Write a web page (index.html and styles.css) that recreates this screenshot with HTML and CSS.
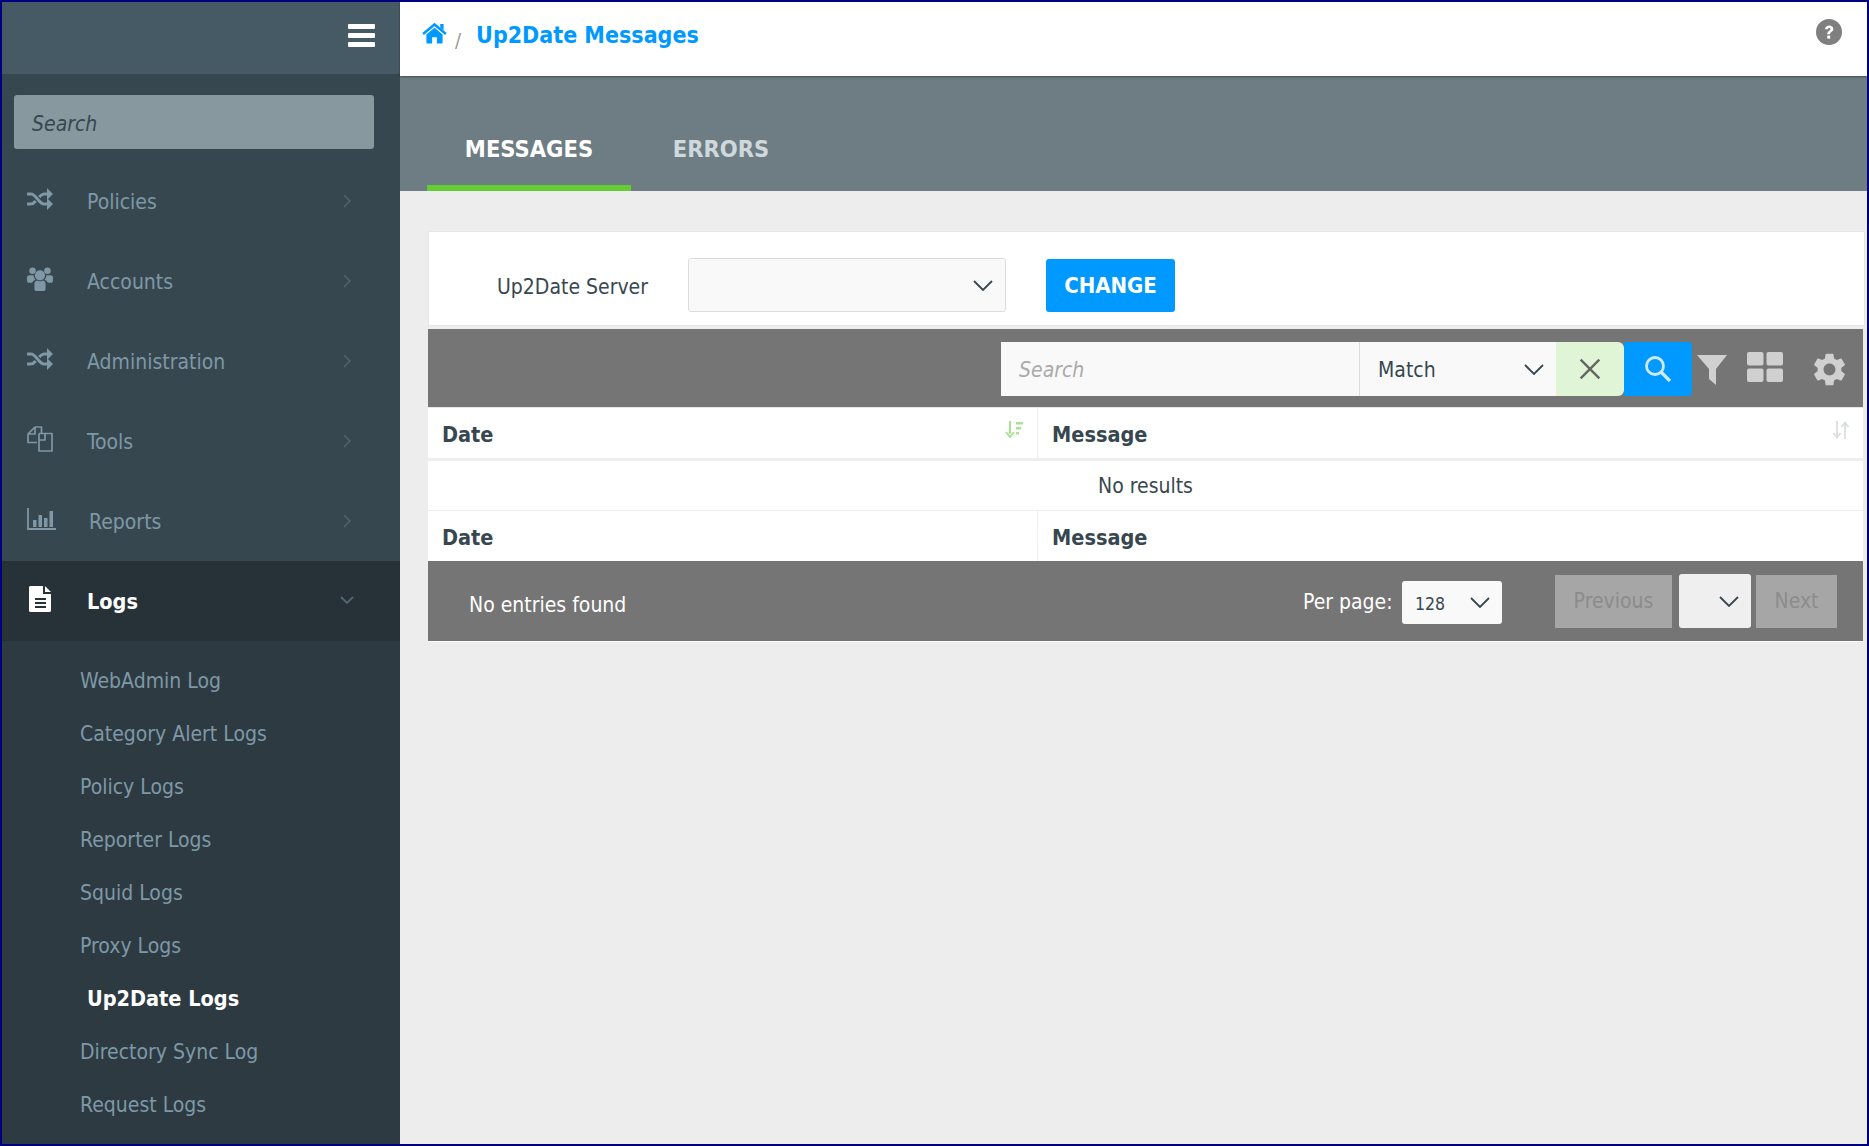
FILE: index.html
```html
<!DOCTYPE html>
<html lang="en">
<head>
    <meta charset="UTF-8">
    <meta name="viewport" content="width=device-width, initial-scale=1.0">
    <title>Up2Date Messages</title>
    <link rel="stylesheet" href="styles.css">
</head>
<body>
    <div class="frame">
        <aside class="sidebar">
            <div class="brand-bar">
                <button class="burger"><span></span><span></span><span></span></button>
            </div>
            <div class="side-search"><input class="side-input" type="text" placeholder="Search"></div>
            <nav class="menu">
                <a class="menu-item">
                    <svg class="menu-icon" viewBox="0 0 26 22"><path d="M0 6h4c5 0 8 10 13 10h4M0 16h4c1.800 0 3.300-1.300 4.700-3M12.300 9C13.700 7.300 15.200 6 17 6h4" fill="none" stroke="currentColor" stroke-width="3"/><path d="M20 0l6 6-6 6zM20 10l6 6-6 6z" fill="currentColor"/></svg>
                    <span class="menu-label">Policies</span>
                    <svg class="chev" viewBox="0 0 8 14"><path d="M1 1l6 6-6 6" fill="none" stroke="currentColor" stroke-width="1.300"/></svg>
                </a>
                <a class="menu-item">
                    <svg class="menu-icon" viewBox="0 0 28 26"><circle cx="6" cy="4" r="3.500" fill="currentColor"/><circle cx="22" cy="4" r="3.500" fill="currentColor"/><circle cx="14" cy="9" r="5.500" fill="currentColor"/><path d="M0 11.500c0-1.500 1-2.500 2.500-2.500H7c.3 2 1 3.500 2.200 4.700-2 1-3.200 2.300-3.800 3.300H2c-1 0-2-1-2-2.500zM28 11.500c0-1.500-1-2.500-2.500-2.500H21c-.3 2-1 3.500-2.200 4.700 2 1 3.200 2.300 3.800 3.300H26c1 0 2-1 2-2.500zM8 18c0-2 1.500-3.500 3-3.500 1 .7 2 1 3 1s2-.3 3-1c1.500 0 3 1.500 3 3.500v5.500c0 1.400-1.100 2.500-2.500 2.500h-7C9.100 26 8 24.900 8 23.500z" fill="currentColor"/></svg>
                    <span class="menu-label">Accounts</span>
                    <svg class="chev" viewBox="0 0 8 14"><path d="M1 1l6 6-6 6" fill="none" stroke="currentColor" stroke-width="1.300"/></svg>
                </a>
                <a class="menu-item">
                    <svg class="menu-icon" viewBox="0 0 26 22"><path d="M0 6h4c5 0 8 10 13 10h4M0 16h4c1.800 0 3.300-1.300 4.700-3M12.300 9C13.700 7.300 15.200 6 17 6h4" fill="none" stroke="currentColor" stroke-width="3"/><path d="M20 0l6 6-6 6zM20 10l6 6-6 6z" fill="currentColor"/></svg>
                    <span class="menu-label">Administration</span>
                    <svg class="chev" viewBox="0 0 8 14"><path d="M1 1l6 6-6 6" fill="none" stroke="currentColor" stroke-width="1.300"/></svg>
                </a>
                <a class="menu-item">
                    <svg class="menu-icon" viewBox="0 0 26 26"><path d="M8 1h6.500v6M14.500 1v6M8 1L1 8v8.500h9M8 1v7H1M12 7.500h13V25H12V14M12 7.500L19 7.500M12 7.500l-0 6.500M12 14h6V7.500" fill="none" stroke="currentColor" stroke-width="1.700" stroke-linejoin="round"/></svg>
                    <span class="menu-label">Tools</span>
                    <svg class="chev" viewBox="0 0 8 14"><path d="M1 1l6 6-6 6" fill="none" stroke="currentColor" stroke-width="1.300"/></svg>
                </a>
                <a class="menu-item menu-reports">
                    <svg class="menu-icon icon-wide" viewBox="0 0 29 22"><path d="M1 0v21h28" fill="none" stroke="currentColor" stroke-width="1.800"/><path d="M6 12h3.500v7H6zM11.500 7H15v12h-3.500zM17 10h3.500v9H17zM22.500 3H26v16h-3.500z" fill="currentColor"/></svg>
                    <span class="menu-label">Reports</span>
                    <svg class="chev" viewBox="0 0 8 14"><path d="M1 1l6 6-6 6" fill="none" stroke="currentColor" stroke-width="1.300"/></svg>
                </a>
                <a class="menu-item menu-open">
                    <svg class="menu-icon icon-file" viewBox="0 0 22 26"><path fill-rule="evenodd" d="M1.500 0H14v8h8v16.500c0 .8-.7 1.500-1.500 1.500h-19C.7 26 0 25.300 0 24.500v-23C0 .7.700 0 1.500 0zM16 0l6 6h-6zM6 12v2h11v-2zM6 16v2h11v-2zM6 20v2h11v-2z" fill="currentColor"/></svg>
                    <span class="menu-label">Logs</span>
                    <svg class="chev-down" viewBox="0 0 14 8"><path d="M1 1l6 6 6-6" fill="none" stroke="currentColor" stroke-width="1.800"/></svg>
                </a>
                <div class="submenu">
                    <a class="sub-item">WebAdmin Log</a>
                    <a class="sub-item">Category Alert Logs</a>
                    <a class="sub-item">Policy Logs</a>
                    <a class="sub-item">Reporter Logs</a>
                    <a class="sub-item">Squid Logs</a>
                    <a class="sub-item">Proxy Logs</a>
                    <a class="sub-item sub-active">Up2Date Logs</a>
                    <a class="sub-item">Directory Sync Log</a>
                    <a class="sub-item">Request Logs</a>
                </div>
            </nav>
        </aside>

        <main class="main">
            <header class="topbar">
                <svg class="home-icon" viewBox="0 0 26 22"><path d="M1 11.500L13 1.500l12 10" fill="none" stroke="currentColor" stroke-width="2.600"/><path d="M19 1h3.500v6.500L19 5zM4.500 12L13 5l8.500 7v8.500c0 .6-.4 1-1 1H15.500V15h-5v6.500H5.500c-.6 0-1-.4-1-1z" fill="currentColor"/></svg>
                <span class="crumb-sep">/</span>
                <span class="crumb-title">Up2Date Messages</span>
                <svg class="help-icon" viewBox="0 0 24 24"><circle cx="12" cy="12" r="12" fill="currentColor"/><path d="M8.300 9.300c.3-2 1.800-3.200 3.900-3.200 2.200 0 3.800 1.300 3.800 3.200 0 2.700-3 2.700-3 4.700h-2.600c0-3.200 2.900-3.200 2.900-4.600 0-.7-.5-1.100-1.200-1.100-.8 0-1.300.5-1.500 1.300z" fill="#fff"/><rect x="10.400" y="15.300" width="2.700" height="2.800" fill="#fff"/></svg>
            </header>

            <div class="tabs">
                <a class="tab tab-active">MESSAGES</a>
                <a class="tab tab-errors">ERRORS</a>
            </div>

            <section class="content">
                <div class="server-panel">
                    <label class="server-label">Up2Date Server</label>
                    <div class="select server-select">
                        <svg class="select-arrow" viewBox="0 0 20 11"><path d="M1 1l9 9 9-9" fill="none" stroke="currentColor" stroke-width="1.800"/></svg>
                    </div>
                    <button class="change-btn">CHANGE</button>
                </div>

                <div class="toolbar">
                    <div class="tool-group">
                        <input class="tool-search" type="text" placeholder="Search">
                        <div class="select match-select">
                            <span>Match</span>
                            <svg class="select-arrow" viewBox="0 0 20 11"><path d="M1 1l9 9 9-9" fill="none" stroke="currentColor" stroke-width="1.800"/></svg>
                        </div>
                        <button class="clear-btn"><svg viewBox="0 0 20 20"><path d="M1.500 1.500l17 17M18.500 1.500l-17 17" fill="none" stroke="currentColor" stroke-width="2.200"/></svg></button>
                        <button class="search-btn"><svg viewBox="0 0 28 28"><circle cx="11" cy="11" r="8.500" fill="none" stroke="currentColor" stroke-width="2.800"/><path d="M17 17l9 9" stroke="currentColor" stroke-width="3.200"/></svg></button>
                    </div>
                    <svg class="tool-filter" viewBox="0 0 30 30"><path d="M0 0h30L19 14v16l-7-6V14z" fill="currentColor"/></svg>
                    <svg class="tool-grid" viewBox="0 0 36 30"><rect width="16.500" height="13.500" rx="2" fill="currentColor"/><rect x="19.500" width="16.500" height="13.500" rx="2" fill="currentColor"/><rect y="16.500" width="16.500" height="13.500" rx="2" fill="currentColor"/><rect x="19.500" y="16.500" width="16.500" height="13.500" rx="2" fill="currentColor"/></svg>
                    <svg class="tool-gear" viewBox="2 2 20 20"><path d="M19.140 12.940c.04-.3.06-.61.06-.94 0-.32-.02-.64-.07-.94l2.030-1.580c.18-.14.23-.41.12-.61l-1.920-3.320c-.12-.22-.37-.29-.59-.22l-2.390.96c-.5-.38-1.030-.7-1.620-.94l-.36-2.540c-.04-.24-.24-.41-.48-.41h-3.840c-.24 0-.43.17-.47.41l-.36 2.540c-.59.24-1.130.57-1.620.94l-2.390-.96c-.22-.08-.47 0-.59.22L2.740 8.870c-.12.21-.08.47.12.61l2.030 1.580c-.05.3-.09.63-.09.94s.02.64.07.94l-2.030 1.580c-.18.14-.23.41-.12.61l1.920 3.320c.12.22.37.29.59.22l2.390-.96c.5.38 1.030.7 1.620.94l.36 2.540c.05.24.24.41.48.41h3.840c.24 0 .44-.17.47-.41l.36-2.540c.59-.24 1.130-.56 1.620-.94l2.390.96c.22.08.47 0 .59-.22l1.920-3.320c.12-.22.07-.47-.12-.61l-2.010-1.580zM12 15.600c-1.980 0-3.600-1.620-3.600-3.600s1.620-3.600 3.600-3.600 3.600 1.620 3.600 3.600-1.620 3.600-3.600 3.600z" fill="currentColor"/></svg>
                </div>

                <div class="grid-table">
                    <div class="row row-head">
                        <div class="cell cell-date">Date
                            <svg class="sort-icon sort-on" viewBox="0 0 18 18"><path d="M5 0v13M1 11l4 5 4-5" fill="none" stroke="currentColor" stroke-width="2"/><path d="M11 1h7v2.500h-7zM11 6h5v2.500h-5zM11 11h3v2.500h-3z" fill="currentColor"/></svg>
                        </div>
                        <div class="cell cell-msg">Message
                            <svg class="sort-icon sort-off" viewBox="0 0 18 18"><path d="M5 0v16M1.500 12l3.500 4.500L8.500 12M13 18V2M9.500 6L13 1.500 16.500 6" fill="none" stroke="currentColor" stroke-width="1.800"/></svg>
                        </div>
                    </div>
                    <div class="row-empty">No results</div>
                    <div class="row row-foot">
                        <div class="cell cell-date">Date</div>
                        <div class="cell cell-msg">Message</div>
                    </div>
                </div>

                <div class="pager">
                    <span class="pager-info">No entries found</span>
                    <span class="per-page">Per page:</span>
                    <div class="select per-select">
                        <span>128</span>
                        <svg class="select-arrow" viewBox="0 0 20 11"><path d="M1 1l9 9 9-9" fill="none" stroke="currentColor" stroke-width="1.800"/></svg>
                    </div>
                    <button class="page-btn btn-prev">Previous</button>
                    <div class="select page-select">
                        <svg class="select-arrow" viewBox="0 0 20 11"><path d="M1 1l9 9 9-9" fill="none" stroke="currentColor" stroke-width="1.800"/></svg>
                    </div>
                    <button class="page-btn btn-next">Next</button>
                </div>
            </section>
        </main>
    </div>
</body>
</html>
```

FILE: styles.css
```css
* {
    box-sizing: border-box;
}
html, body {
    margin: 0;
    height: 100%;
}
body {
    font-family: "DejaVu Sans", sans-serif;
    font-stretch: condensed;
    font-size: 21px;
    color: #37474f;
}
input, button {
    font-family: inherit;
    font-stretch: inherit;
}
.frame {
    display: flex;
    height: 1146px;
    border: 2px solid #000080;
    overflow: hidden;
    background-color: #ededed;
}

/* sidebar */
.sidebar {
    width: 398px;
    flex: none;
    background-color: #37474f;
    display: flex;
    flex-direction: column;
}
.brand-bar {
    height: 72px;
    background-color: #465a65;
    display: flex;
    align-items: center;
    justify-content: flex-end;
    padding-right: 25px;
}
.burger {
    width: 27px;
    padding: 0;
    border: 0;
    background: none;
    display: flex;
    flex-direction: column;
    gap: 4px;
    margin-top: -6px;
}
.burger span {
    height: 5px;
    background-color: #fff;
    border-radius: 1px;
}
.side-search {
    padding: 21px 26px 0 12px;
}
.side-input {
    display: block;
    width: 100%;
    height: 54px;
    padding: 3px 18px 0;
    border: 0;
    border-radius: 3px;
    background-color: #87999f;
    font-size: 21px;
}
.side-input::placeholder {
    color: #37474f;
    font-style: italic;
    opacity: 1;
}
.menu {
    flex: 1;
    display: flex;
    flex-direction: column;
    padding-top: 12px;
}
.menu-item {
    height: 80px;
    flex: none;
    display: flex;
    align-items: center;
    padding-left: 25px;
    color: #7e98a6;
}
.menu-icon {
    width: 26px;
    height: 26px;
    flex: none;
    margin-top: -4px;
    margin-right: 34px;
}
.icon-wide {
    width: 29px;
    margin-right: 33px;
}
.icon-file {
    width: 22px;
    margin-left: 2px;
    margin-right: 36px;
}
.menu-label {
    flex: 1;
    padding-top: 2px;
}
.chev {
    width: 8px;
    height: 14px;
    color: #546670;
    margin-right: 49px;
}
.chev-down {
    width: 14px;
    height: 8px;
    color: #546670;
    margin-right: 46px;
    margin-top: -2px;
}
.menu-open {
    background-color: #263238;
    color: #fff;
    font-weight: bold;
    font-size: 21.5px;
}
.menu-open .menu-icon {
    color: #fff;
}
.menu-open .menu-label {
    padding-top: 0;
}
.submenu {
    flex: 1;
    background-color: #2d3a42;
    padding-top: 13px;
    display: flex;
    flex-direction: column;
}
.sub-item {
    height: 53px;
    flex: none;
    display: flex;
    align-items: center;
    padding-left: 78px;
    color: #7e98a6;
}
.sub-active {
    color: #fff;
    font-weight: bold;
    font-size: 21.5px;
    padding-left: 85px;
}

/* main column */
.main {
    flex: 1;
    min-width: 0;
    display: flex;
    flex-direction: column;
}
.topbar {
    height: 74px;
    flex: none;
    background-color: #fff;
    display: flex;
    align-items: center;
    padding: 0 25px 0 22px;
    box-shadow: 0 1px 2px rgba(0,0,0,0.4);
    position: relative;
}
.home-icon {
    width: 25px;
    height: 21px;
    color: #0099ff;
    margin-top: -11px;
}
.crumb-sep {
    color: #999;
    font-size: 20px;
    margin: 2px 15px 0 8px;
}
.crumb-title {
    color: #0099ff;
    font-weight: bold;
    font-size: 23px;
    flex: 1;
    margin-top: -9px;
}
.help-icon {
    width: 26px;
    height: 26px;
    color: #7f7f7f;
    margin-top: -14px;
}
.tabs {
    height: 115px;
    flex: none;
    background-color: #6e7d83;
    display: flex;
    align-items: flex-end;
    padding-left: 27px;
}
.tab {
    height: 72px;
    width: 204px;
    display: flex;
    align-items: center;
    justify-content: center;
    padding-bottom: 6px;
    font-size: 23.5px;
    font-weight: bold;
    color: #cfd8dc;
    border-bottom: 6px solid transparent;
}
.tab-active {
    color: #fff;
    border-bottom-color: #66cc33;
}
.tab-errors {
    width: 180px;
}
.content {
    flex: 1;
    padding: 40px 4px 0 28px;
}
.server-panel {
    height: 95px;
    background-color: #fff;
    border: 1px solid #e6e6e6;
    display: flex;
    align-items: center;
    padding: 13px 0 0 68px;
    margin-bottom: 3px;
    margin-right: -2px;
}
.server-label {
    width: 191px;
    flex: none;
    padding-top: 3px;
}
.select {
    display: flex;
    align-items: center;
    justify-content: space-between;
    background-color: #f9f9f9;
    border: 1px solid #ddd;
    border-radius: 3px;
}
.select-arrow {
    width: 20px;
    height: 11px;
    color: #37474f;
    flex: none;
}
.server-select {
    width: 318px;
    height: 54px;
    justify-content: flex-end;
    padding-right: 12px;
}
.change-btn {
    width: 129px;
    height: 53px;
    margin-left: 40px;
    border: 0;
    border-radius: 3px;
    background-color: #0099ff;
    color: #fff;
    font-size: 22px;
    font-weight: bold;
}
.toolbar {
    height: 78px;
    background-color: #757575;
    display: flex;
    align-items: center;
    padding-left: 573px;
}
.tool-group {
    display: flex;
    height: 54px;
    margin-top: 2px;
}
.tool-search {
    width: 358px;
    height: 54px;
    padding: 2px 18px 0;
    border: 0;
    background-color: #f9f9f9;
    font-size: 21px;
}
.tool-search::placeholder {
    color: #aaa;
    font-style: italic;
    opacity: 1;
}
.match-select {
    width: 197px;
    height: 54px;
    border: 0;
    border-left: 1px solid #ddd;
    border-radius: 0;
    padding: 0 12px 0 18px;
}
.match-select span {
    padding-top: 2px;
}
.clear-btn {
    width: 68px;
    border: 0;
    padding: 0;
    background-color: #e0f5d6;
    color: #666;
    border-radius: 0 6px 6px 0;
}
.clear-btn svg {
    width: 22px;
    height: 22px;
    display: block;
    margin: 0 auto;
}
.search-btn {
    width: 68px;
    border: 0;
    padding: 0;
    background-color: #0099ff;
    color: #cfe9fb;
    border-radius: 0 4px 4px 0;
}
.search-btn svg {
    width: 28px;
    height: 28px;
    display: block;
    margin: 0 auto;
}
.tool-filter {
    width: 30px;
    height: 30px;
    color: #d0d0d0;
    margin-left: 5px;
    margin-top: 3px;
}
.tool-grid {
    width: 36px;
    height: 30px;
    color: #d0d0d0;
    margin-left: 20px;
    margin-top: -3px;
}
.tool-gear {
    width: 33px;
    height: 33px;
    color: #d0d0d0;
    margin-left: 30px;
    margin-top: 2px;
}
.grid-table {
    background-color: #fff;
}
.row {
    display: flex;
}
.cell {
    font-weight: bold;
    font-size: 21.5px;
    padding: 2px 14px 0;
    display: flex;
    align-items: center;
    position: relative;
}
.cell-date {
    width: 610px;
    flex: none;
    border-right: 1px solid #eee;
}
.cell-msg {
    flex: 1;
}
.row-head {
    height: 54px;
    border-top: 1px solid #e6e6e6;
    border-bottom: 3px solid #eee;
}
.row-foot {
    height: 50px;
}
.row-empty {
    height: 50px;
    padding-top: 1px;
    display: flex;
    align-items: center;
    justify-content: center;
    border-bottom: 1px solid #eee;
}
.sort-icon {
    position: absolute;
    top: 13px;
    right: 14px;
    width: 18px;
    height: 18px;
}
.sort-on {
    color: #a8e38f;
}
.sort-off {
    color: #d9dee0;
    right: 13px;
}
.pager {
    height: 81px;
    background-color: #757575;
    border-bottom: 1px solid #fff;
    display: flex;
    align-items: center;
    padding-left: 41px;
    color: #fff;
}
.pager-info {
    width: 834px;
    flex: none;
    margin-top: 8px;
}
.per-page {
    width: 99px;
    flex: none;
    margin-top: 1px;
}
.per-select {
    width: 100px;
    height: 43px;
    border: 0;
    padding: 0 12px 0 13px;
    color: #37474f;
    font-size: 17.5px;
    margin-top: 3px;
}
.per-select span {
    padding-top: 2px;
}
.page-btn {
    height: 53px;
    border: 0;
    padding: 0;
    background-color: #a6a6a6;
    color: #8c8c8c;
    font-size: 21px;
}
.btn-prev {
    width: 117px;
    margin-left: 53px;
}
.btn-next {
    width: 81px;
    margin-left: 5px;
}
.page-select {
    width: 72px;
    height: 54px;
    border: 0;
    background-color: #efefef;
    justify-content: flex-end;
    padding-right: 12px;
    margin-left: 7px;
}
```
